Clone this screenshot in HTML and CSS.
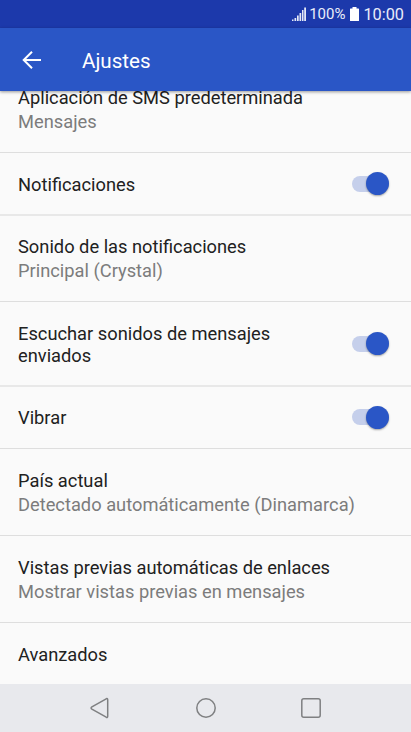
FILE: index.html
```
<!DOCTYPE html>
<html lang="es">
<head>
    <meta charset="UTF-8">
    <meta name="viewport" content="width=device-width, initial-scale=1.0">
    <title>Ajustes</title>
    <link rel="stylesheet" href="styles.css">
</head>
<body>
    <div class="status-bar">
        <svg class="signal" width="14" height="14" viewBox="0 0 14 14">
            <path d="M0 12.5h1.500V14H0zM2.500 11h1.700v3H2.500zM5 8.500h1.700V14H5zM7.500 6h1.700v8H7.500zM10 3h1.500v11H10zM12.200.500H14V14h-1.800z" fill="#e4e9f7"/>
        </svg>
        <span class="percent">100%</span>
        <svg class="battery" width="9" height="14" viewBox="0 0 9 14">
            <path d="M2.500 0h4v1.500h2q.5 0 .5.500v11.500q0 .5-.5.500h-8q-.5 0-.5-.5V2q0-.5.500-.5h2z" fill="#fff"/>
        </svg>
        <span class="clock">10:00</span>
    </div>

    <header class="app-bar">
        <svg class="back" width="20" height="20" viewBox="0 0 20 20" fill="none" stroke="#fff" stroke-width="2">
            <path d="M10 1.700 1.700 10l8.300 8.300M2 10h17"/>
        </svg>
        <h1 class="title">Ajustes</h1>
    </header>

    <main class="content">
        <ul class="settings">
            <li class="item two-line">
                <div>
                    <p class="name">Aplicación de SMS predeterminada</p>
                    <p class="summary">Mensajes</p>
                </div>
            </li>
            <li class="item soft">
                <p class="name">Notificaciones</p>
                <span class="switch"></span>
            </li>
            <li class="item two-line">
                <div>
                    <p class="name">Sonido de las notificaciones</p>
                    <p class="summary">Principal (Crystal)</p>
                </div>
            </li>
            <li class="item wrapped soft">
                <p class="name">Escuchar sonidos de mensajes enviados</p>
                <span class="switch"></span>
            </li>
            <li class="item">
                <p class="name">Vibrar</p>
                <span class="switch"></span>
            </li>
            <li class="item two-line">
                <div>
                    <p class="name">País actual</p>
                    <p class="summary">Detectado automáticamente (Dinamarca)</p>
                </div>
            </li>
            <li class="item two-line">
                <div>
                    <p class="name">Vistas previas automáticas de enlaces</p>
                    <p class="summary">Mostrar vistas previas en mensajes</p>
                </div>
            </li>
            <li class="item">
                <p class="name">Avanzados</p>
            </li>
        </ul>
    </main>

    <nav class="nav-bar">
        <svg width="22" height="22" viewBox="0 0 22 22">
            <path d="M17.200 1.800 2.900 9.900q-1.600 1.100 0 2.200l14.300 8.100q1.500.700 1.500-1V2.800q0-1.700-1.500-1z"/>
        </svg>
        <svg width="22" height="22" viewBox="0 0 22 22">
            <circle cx="11" cy="11" r="9.200"/>
        </svg>
        <svg width="22" height="22" viewBox="0 0 22 22">
            <rect x="1.800" y="1.800" width="18.400" height="18.400" rx="2"/>
        </svg>
    </nav>
</body>
</html>
```

FILE: styles.css
```
* {
  box-sizing: border-box;
}

body {
  margin: 0;
  height: 732px;
  display: flex;
  flex-direction: column;
  overflow: hidden;
  background: #fafafa;
  font-family: Roboto, sans-serif;
  color: #212121;
}

.status-bar {
  height: 28px;
  flex: none;
  display: flex;
  align-items: center;
  justify-content: flex-end;
  padding-right: 7px;
  background: #1c39ab;
  color: #e9edf9;
}

.percent {
  margin-left: 3px;
  font-size: 15px;
}

.battery {
  margin-left: 5px;
}

.clock {
  margin-left: 4px;
  font-size: 16.3px;
}

.app-bar {
  height: 63px;
  flex: none;
  display: flex;
  align-items: center;
  padding: 1px 0 0 22px;
  background: #2a56c6;
  color: #fff;
  position: relative; /* keeps the shadow above the list */
  box-shadow: 0 1px 3px rgba(0, 0, 0, 0.4);
}

.title {
  margin: 0 0 0 40px;
  padding-top: 2px;
  font-size: 20.6px;
  font-weight: 400;
}

.content {
  flex: 1;
  min-height: 0;
  overflow: hidden;
}

/* list is scrolled a little under the app bar */
.settings {
  margin: -25px 0 0;
  padding: 0;
  list-style: none;
}

.item {
  height: 63px;
  display: flex;
  align-items: center;
  justify-content: space-between;
  padding: 0 22px 0 18px;
  border-bottom: 1px solid #dedede;
}

.item.soft {
  border-bottom: 2px solid #e8e8e8;
}

.item.two-line {
  height: 87px;
}

.item.wrapped {
  height: 85px;
}

.item.soft + .item {
  margin-top: -1px;
}

.item:last-child {
  border-bottom: 0;
}

.name,
.summary {
  margin: 0;
  font-size: 18.3px;
  line-height: 22px;
}

.name {
  padding-top: 2px;
}

.wrapped .name {
  width: 270px;
}

.item:last-child .name {
  padding-top: 0;
}

.summary {
  margin-top: 2px;
  color: #7c7c7c;
}

.switch {
  flex: none;
  display: flex;
  align-items: center;
  justify-content: flex-end;
  width: 37px;
  height: 16px;
  border-radius: 8px;
  background: #c5cfeb;
}

.switch::after {
  content: "";
  flex: none;
  width: 23px;
  height: 23px;
  border-radius: 50%;
  background: #2a56c6;
  box-shadow: 0 1px 2px rgba(0, 0, 0, 0.35);
}

.nav-bar {
  height: 48px;
  flex: none;
  display: flex;
  align-items: center;
  justify-content: center;
  gap: 83.5px;
  background: #e8e9ed;
}

.nav-bar svg {
  fill: none;
  stroke: #7f8082;
  stroke-width: 1.5;
}
```
